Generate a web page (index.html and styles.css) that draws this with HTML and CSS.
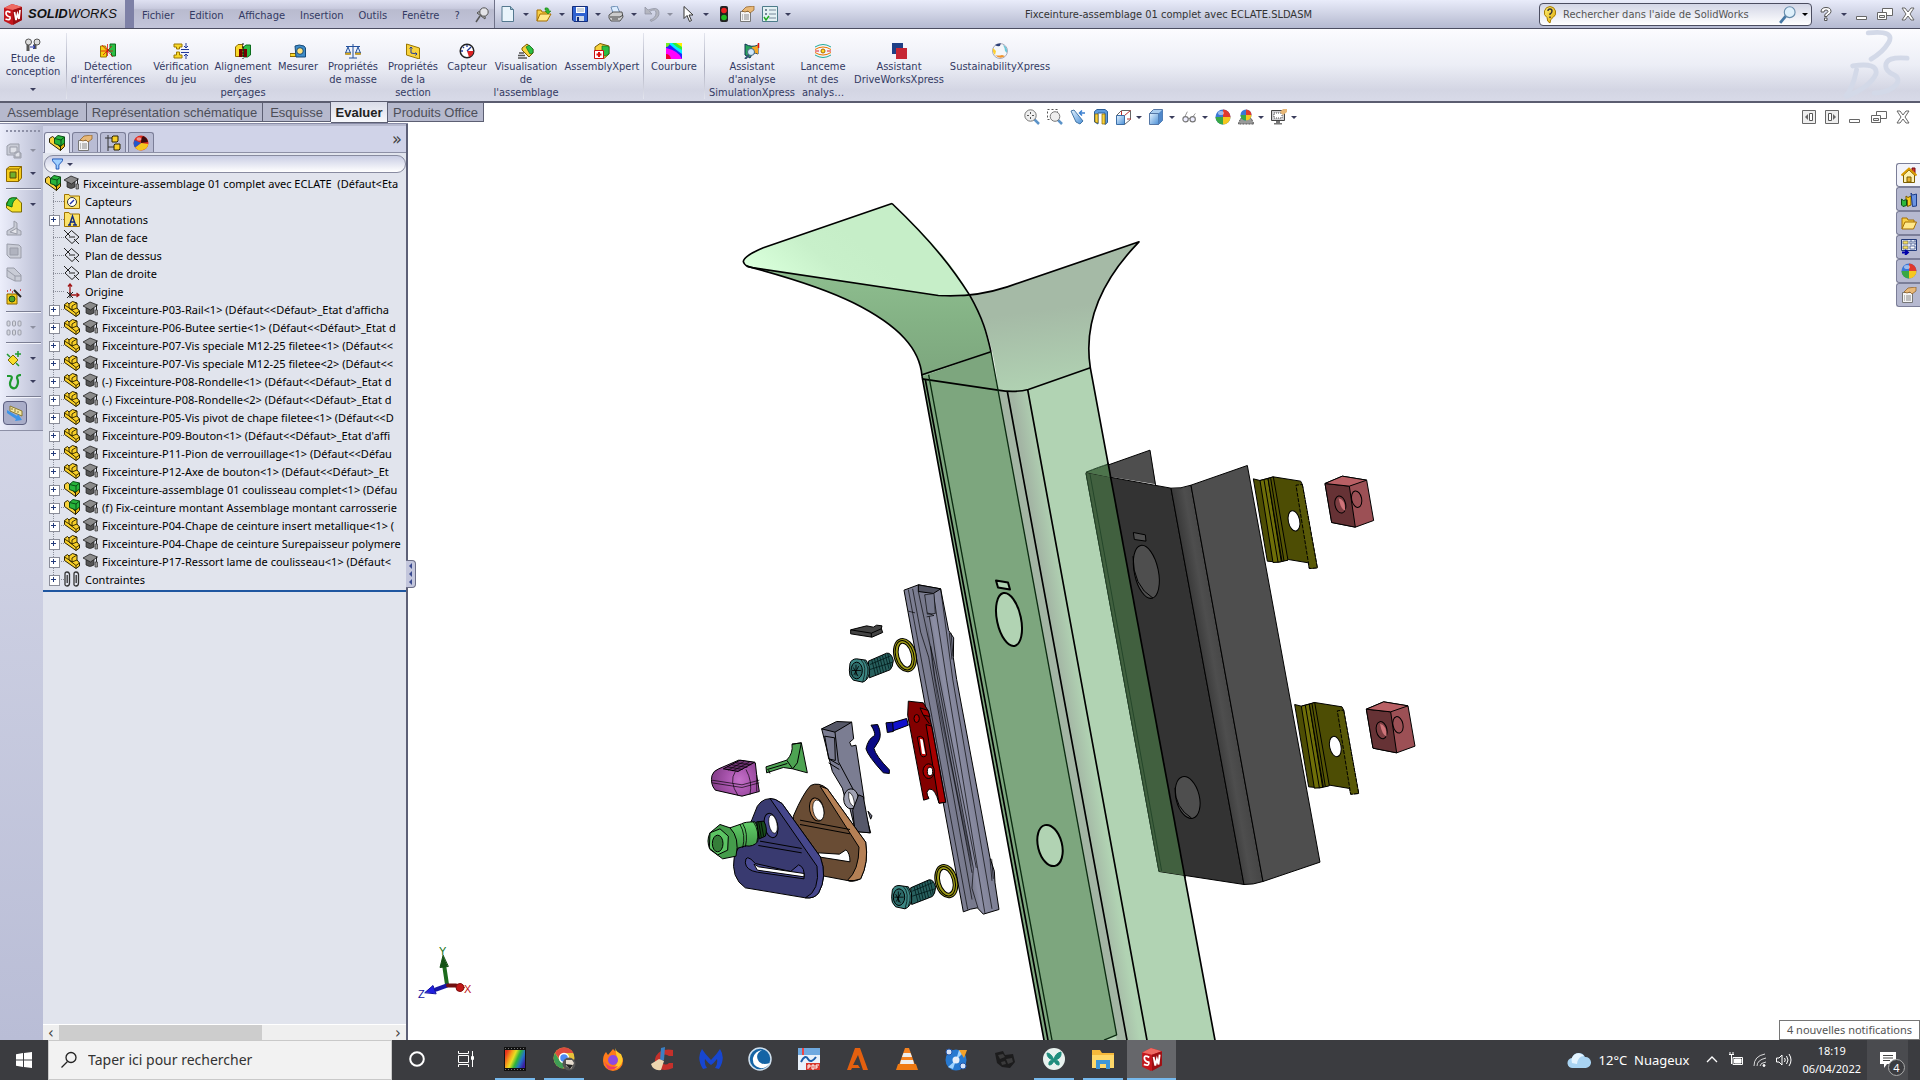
FILE: index.html
```html
<!DOCTYPE html>
<html lang="fr">
<head>
<meta charset="utf-8">
<title>SolidWorks - Fixceinture-assemblage 01 complet avec ECLATE.SLDASM</title>
<link rel="stylesheet" href="styles.css">
</head>
<body>
<svg class="sprite" aria-hidden="true">
  <defs>
    <linearGradient id="gold" x1="0" y1="0" x2="1" y2="1"><stop offset="0" stop-color="#fff27a"/><stop offset="1" stop-color="#e0a800"/></linearGradient>
    <linearGradient id="blueGlass" x1="0" y1="0" x2="1" y2="1"><stop offset="0" stop-color="#e6f4ff"/><stop offset="1" stop-color="#4a8fd6"/></linearGradient>
    <linearGradient id="film" x1="0" y1=".3" x2="1" y2=".7"><stop offset="0" stop-color="#e8341c"/><stop offset=".25" stop-color="#f5a51c"/><stop offset=".4" stop-color="#e6e022"/><stop offset=".6" stop-color="#2fb53a"/><stop offset=".8" stop-color="#2472c8"/><stop offset="1" stop-color="#3a1fa0"/></linearGradient>
    <linearGradient id="foldGreen" gradientUnits="userSpaceOnUse" x1="900" y1="750" x2="960" y2="740"><stop offset="0" stop-color="#a3b5a4"/><stop offset="1" stop-color="#b1d3b3"/></linearGradient>
    <linearGradient id="lipGreen" gradientUnits="userSpaceOnUse" x1="130" y1="260" x2="300" y2="60"><stop offset="0" stop-color="#d9ffdb"/><stop offset=".3" stop-color="#d0f8d2"/><stop offset=".6" stop-color="#c8f0ca"/><stop offset="1" stop-color="#c6eec8"/></linearGradient>
    <linearGradient id="neckGreen" x1="0" y1="0" x2="0" y2="1"><stop offset="0" stop-color="#8fbf90"/><stop offset=".5" stop-color="#84b285"/><stop offset="1" stop-color="#7da67e"/></linearGradient>
    <linearGradient id="flareGreen" x1=".4" y1="0" x2=".55" y2="1"><stop offset=".45" stop-color="#a5baa6"/><stop offset="1" stop-color="#b1d3b3"/></linearGradient>
    <linearGradient id="foldDark" gradientUnits="userSpaceOnUse" x1="430" y1="770" x2="500" y2="758"><stop offset="0" stop-color="#363636"/><stop offset=".6" stop-color="#4e4e4e"/><stop offset="1" stop-color="#474747"/></linearGradient>
    <linearGradient id="railGray" gradientUnits="userSpaceOnUse" x1="730" y1="560" x2="850" y2="540"><stop offset="0" stop-color="#7f8196"/><stop offset=".4" stop-color="#77798c"/><stop offset=".55" stop-color="#8c8ea4"/><stop offset="1" stop-color="#7b7d92"/></linearGradient>
    <radialGradient id="pink" gradientUnits="userSpaceOnUse" cx="148" cy="632" r="75"><stop offset="0" stop-color="#c572ca"/><stop offset=".5" stop-color="#a955ae"/><stop offset="1" stop-color="#8a418f"/></radialGradient>
    <linearGradient id="bushing" x1="0" y1="0" x2="0" y2="1"><stop offset="0" stop-color="#63cf6a"/><stop offset="1" stop-color="#3c9142"/></linearGradient>
  </defs>
  <symbol id="i-cube" viewBox="0 0 20 22"><path d="M1 5 9 1l10 3v13l-10 5-8-4z" fill="#c4161c"/><path d="M1 5 9 1l10 3-9 3z" fill="#ee6a62"/><path d="M10 7v15l9-5V4z" fill="#9d0e12"/><path d="M7.500 9.500Q3 7 3 10t4 4q1 4-4.500 2M11.500 9l1.500 8 1.500-6 1.500 5 1-9" fill="none" stroke="#fff" stroke-width="1.700"/></symbol>
  <symbol id="i-pin" viewBox="0 0 14 16"><path d="m5 9-4 6" stroke="#555" stroke-width="1.500"/><path d="m2 6 8 6q1-2-1-4L6 5Q3 4 2 6z" fill="#aaa" stroke="#555"/><circle cx="9" cy="5" r="4.200" fill="#e4e4e8" stroke="#555"/></symbol>
  <symbol id="i-new" viewBox="0 0 16 16"><path d="M2 .5h8.500l3 3v12H2z" fill="#e9f4fb" stroke="#54788f"/><path d="M10.500.5v3h3" fill="#9bc" stroke="#54788f"/></symbol>
  <symbol id="i-open" viewBox="0 0 16 16"><path d="M1 15V4h4l1 2h6v3" fill="#f8d046" stroke="#a66f00"/><path d="m1 15 3-7h11l-4 7z" fill="#ffe88a" stroke="#a66f00"/><path d="M9 2q4-1 4 3h2l-3 3-3-3h2q0-1-2-1z" fill="#2db52d" stroke="#147a14" stroke-width=".5"/></symbol>
  <symbol id="i-save" viewBox="0 0 16 16"><path d="M.5.500h15v15H2l-1.500-1.500z" fill="#2f62d0" stroke="#132d7b"/><path d="M4 1h9v6H4z" fill="#fff"/><path d="M5 3h7M5 5h7" stroke="#9ab"/><path d="M4 10h8v5H4z" fill="#cdd7e6"/><path d="M5 11h2v4H5z" fill="#132d7b"/></symbol>
  <symbol id="i-print" viewBox="0 0 16 16"><path d="m3 1 6-1 3 7H5z" fill="#dcecff" stroke="#6d8fb5"/><path d="m1 9 4-3h9l1 5-3 4H3l-2-3z" fill="#ccc" stroke="#555"/><path d="M2 11h10l3-2M4 13h6" stroke="#444" fill="none"/></symbol>
  <symbol id="i-undo" viewBox="0 0 16 16"><path d="M1 1v7h7L5.500 5.500Q12 2 12 7t-6 7l1 1.500Q16 12 15 6T4 4z" fill="#b4b6c0" stroke="#8d90a0" stroke-width=".7"/></symbol>
  <symbol id="i-pointer" viewBox="0 0 16 16"><path d="M4 .5v12l3-3 2.500 6 2-1-2.500-5.500H13z" fill="#fff" stroke="#333"/></symbol>
  <symbol id="i-light" viewBox="0 0 16 16"><rect x="4" width="8" height="16" rx="2" fill="#222"/><circle cx="8" cy="4.500" r="2.800" fill="#e22"/><circle cx="8" cy="11.500" r="2.800" fill="#2b2"/></symbol>
  <symbol id="i-prop" viewBox="0 0 16 16"><path d="M1.500 5.500h10v10h-10z" fill="#f4f4f4" stroke="#777"/><path d="M3 9h1M5 9h5M3 11h1M5 11h5M3 13h1M5 13h5" stroke="#888"/><path d="m3 5 4-4 8-1v4l-4 3-2-2-3 1z" fill="#e8b877" stroke="#8a5a20" stroke-width=".7"/></symbol>
  <symbol id="i-list" viewBox="0 0 16 16"><path d="M.5.500h15v15H.5z" fill="#e4f1f3" stroke="#4d7c8a"/><path d="M3 3h2v2H3zM3 7h2v2H3z" fill="#789"/><path d="M7 4h7M7 8h7M7 12h7" stroke="#789"/><path d="m2 11 2 3 3-4" stroke="#2a2" stroke-width="1.500" fill="none"/></symbol>
  <symbol id="i-bulb" viewBox="0 0 14 18"><path d="M7 .5a6 6 0 0 1 3 11q-3 1.500-3 5.500-3-1-3-5.500A6 6 0 0 1 7 .5z" fill="url(#gold)" stroke="#a67b00"/><path d="M5 5q0-2 2-2t2 2-2 3v1M7 10.500v1.500" stroke="#333" stroke-width="1.400" fill="none"/></symbol>
  <symbol id="i-mag" viewBox="0 0 16 16"><path d="m6 9-5 6" stroke="#4678a4" stroke-width="2.500"/><circle cx="9.500" cy="5.500" r="4.800" fill="#dff0fb" stroke="#668cab"/></symbol>
  <symbol id="i-help" viewBox="0 0 12 14"><path d="M1 5q0-4.500 5-4.500t5 4q0 2-3 3.500-1 .5-1 1.500H4.500q0-3 2.500-3.700Q8 5 8 4.500 8 3 6 3T4 5zM4.500 11H7v2.500H4.500z" fill="#fff" stroke="#555"/></symbol>
  <symbol id="i-min" viewBox="0 0 14 14"><path d="M1.500 9.500h10v3h-10z" fill="#fff" stroke="#666"/></symbol>
  <symbol id="i-restore" viewBox="0 0 16 14"><path d="M5.500 1.500h10v7h-10z" fill="#fff" stroke="#666"/><path d="M.5 5.500h9v7h-9z" fill="#fff" stroke="#666"/><path d="M2.500 8.500h5v2h-5z" fill="#eee" stroke="#666"/></symbol>
  <symbol id="i-close" viewBox="0 0 14 14"><path d="M1 1h3l3 4 3-4h3L9 7l4 6h-3L7 9l-3 4H1l4-6z" fill="#fff" stroke="#666"/></symbol>
  <symbol id="i-panel-l" viewBox="0 0 14 14"><path d="M.5.500h13v13H.5z" fill="#eee" stroke="#666"/><path d="M7.500 3.500h3v7h-3z" fill="#fff" stroke="#555"/><path d="M6 4 3 7l3 3z" fill="#666"/></symbol>
  <symbol id="i-panel-r" viewBox="0 0 14 14"><path d="M.5.500h13v13H.5z" fill="#eee" stroke="#666"/><path d="M3.500 3.500h3v7h-3z" fill="#fff" stroke="#555"/><path d="m8 4 3 3-3 3z" fill="#666"/></symbol>
  <symbol id="i-study" viewBox="0 0 16 14"><path d="M3 6v7M10 6v5" stroke="#555" stroke-width="3"/><circle cx="3.500" cy="4" r="3" fill="#ddd" stroke="#555"/><circle cx="12" cy="4" r="3" fill="#ddd" stroke="#555"/><path d="M5 9h5m-2-2 2 2-2 2" stroke="#23a" fill="none"/></symbol>
  <symbol id="i-interf" viewBox="0 0 16 16"><path d="M.5 3h5l1 3 2 1-2 2v5h-6z" fill="#f5cf10" stroke="#9a7700"/><path d="M10 1h5.500v12h-4v-3L8 7l2-2z" fill="#2cbf44" stroke="#0c6d1d"/><path d="m2 2 11 12M12 3 3 12M7.500 1v12M1 8h12" stroke="#d11" stroke-width=".8"/></symbol>
  <symbol id="i-check" viewBox="0 0 16 16"><path d="M1 1h8v3H6.500v2h-3V4H1zM3.500 9h3v3H9v3H1v-3h2.500z" fill="#f9d92a" stroke="#9a7700"/><path d="M8 6.500h8M8 9.500h8M13 0v5m-2-2 2 2 2-2M13 16v-5m-2 2 2-2 2 2" stroke="#223a9a" fill="none"/></symbol>
  <symbol id="i-align" viewBox="0 0 16 16"><path d="M.5 4 3 1.500h4.500v12H.5z" fill="#f9d92a" stroke="#8a6700"/><path d="M8.500 4 11 2h4.500v10l-3 2h-4z" fill="#2cbf44" stroke="#0c6d1d"/><path d="M4 6h3v8H4zM9 6h3v8H9z" fill="#700"/><path d="M8 0v16" stroke="#111" stroke-dasharray="2 1"/></symbol>
  <symbol id="i-measure" viewBox="0 0 16 16"><path d="M0 10.500h6v3H0z" fill="#f9d92a" stroke="#8a6700"/><path d="M5 3q4-2 9 0l1.500 2v9H6z" fill="#3e8cc9" stroke="#174a78"/><circle cx="10" cy="8" r="3.300" fill="#ffe27a" stroke="#174a78"/></symbol>
  <symbol id="i-mass" viewBox="0 0 16 16"><path d="M8 1v14M4 15h8M1 3.500h14M3 4l-2.500 6h5zM13 4l-2.500 6h5z" stroke="#23509c" fill="#d6e6fa"/><path d="M.5 10h5v1.500h-5zM10.500 10h5v1.500h-5z" fill="#e9b91b" stroke="#8a6700" stroke-width=".5"/></symbol>
  <symbol id="i-section" viewBox="0 0 16 16"><path d="m1.500 1 13 4v11l-13-4z" fill="#f8d23c" stroke="#9a7700"/><path d="M6 10V4M6 10l6 1M4.500 5.500 6 4l1.500 1.500M10.500 9.500 12 11l-1.500 1.500" stroke="#223a9a" fill="none"/></symbol>
  <symbol id="i-sensor" viewBox="0 0 16 16"><circle cx="8" cy="8" r="6.800" fill="#fff" stroke="#222" stroke-width="1.500"/><path d="M8 8h6.500A6.500 6.500 0 0 1 10 14z" fill="#d22"/><path d="M8 8 12 4M8 2v2M2 8h2M4 4l1 1" stroke="#223a9a" stroke-width="1.300"/></symbol>
  <symbol id="i-visu" viewBox="0 0 16 16"><path d="m4 5 5-4 6 5v4l-4 4-7-7z" fill="#f8d23c" stroke="#7a5c00"/><path d="m8 4 3-2 4 4v4l-3 1z" fill="#2cbf44" stroke="#0c6d1d" stroke-width=".7"/><path d="M1 10h5M0 12.500h7M0 15h9" stroke="#555" stroke-width="1.500"/></symbol>
  <symbol id="i-xpert" viewBox="0 0 16 16"><path d="m1 4 5-3.500L15 3v8l-5 4.500H1z" fill="#f8d23c" stroke="#7a5c00"/><path d="M8 3h5l2 1v7l-4 2-3-1z" fill="#2cbf44" stroke="#0c6d1d" stroke-width=".7"/><path d="M.5 7.500h9v8h-9z" fill="#fff" stroke="#c11"/><path d="M5 9v5M2.500 11.500h5" stroke="#d11" stroke-width="2"/></symbol>
  <symbol id="i-curv" viewBox="0 0 16 16"><path d="M0 0h16v16H0z" fill="#f0f"/><path d="M0 0h16v16q-3-8-16-11z" fill="#22f"/><path d="M2 0h14v11Q10 7 2 0z" fill="#0ef"/><path d="M6 0h10v7Q10 4 6 0z" fill="#3e3"/><path d="M10 0h6v4z" fill="#fe0"/><path d="M0 0h4q-1 4-4 4z" fill="#7e2"/><path d="M0 11q4 0 5 5H0z" fill="#e03"/></symbol>
  <symbol id="i-simu" viewBox="0 0 16 16"><path d="M1 1q7 4 13 1v9q-5-3-8 4L1 12z" fill="#27a35d" stroke="#135"/><path d="M8 4q4 0 6-2v9q-3-2-5-1z" fill="#f5a623"/><circle cx="7" cy="9" r="3.500" fill="#cfe8fb" stroke="#467"/><path d="m5 12-4 4" stroke="#357" stroke-width="2"/><path d="M14.500 0v5" stroke="#d11" stroke-width="1.500"/></symbol>
  <symbol id="i-flow" viewBox="0 0 16 16"><circle cx="8" cy="8" r="2" fill="#fd2" stroke="#a60"/><path d="M0 4q8-5 16 0M0 12q8 5 16 0" stroke="#2a9" fill="none"/><path d="M0 6.500q8-5 16 0M0 9.500q8 5 16 0" stroke="#e70" fill="none"/><path d="M0 8h4M12 8h4" stroke="#d22"/></symbol>
  <symbol id="i-drive" viewBox="0 0 16 16"><path d="M1 0h11v11H1z" fill="#1f3f86"/><path d="M5 5h11v11H5z" fill="#c62634"/></symbol>
  <symbol id="i-sust" viewBox="0 0 16 16"><circle cx="8" cy="8" r="7.500" fill="#f4f7fa" stroke="#aab"/><path d="M3 2a8 8 0 0 1 6-1.500Q8 5 3 2z" fill="#2b3f78"/><path d="M11 2q5 2 4 8l-2-2q0-3-2-6z" fill="#6cc7d9"/><path d="M3 12q5 5 10 1l-3-1q-4 1-7 0z" fill="#f0932b"/><path d="M1 5q-1 4 2 7l1-4z" fill="#ffd02e"/></symbol>
  <symbol id="i-zoomfit" viewBox="0 0 16 16"><path d="m10 10 5 5" stroke="#5b93c8" stroke-width="2.500"/><circle cx="6.500" cy="6.500" r="5.700" fill="#eee" stroke="#777"/><path d="M6.500 3v7M3 6.500h7" stroke="#555" stroke-dasharray="2 3"/></symbol>
  <symbol id="i-zoomarea" viewBox="0 0 16 16"><path d="M.5.500h10v10H.5z" fill="none" stroke="#555" stroke-dasharray="2 2"/><path d="m11 11 4 4" stroke="#5b93c8" stroke-width="2.500"/><circle cx="8" cy="7.500" r="4.800" fill="#eee" stroke="#777"/></symbol>
  <symbol id="i-prev" viewBox="0 0 16 16"><path d="m1 2 3-1 9 11-3 3-4-2z" fill="url(#blueGlass)" stroke="#4477a8"/><path d="M15 4h-5m2-2.500L9.500 4 12 6.500" stroke="#3a7fd0" stroke-width="1.500" fill="none"/></symbol>
  <symbol id="i-sect" viewBox="0 0 16 16"><path d="M1.500 2.500 4 .5h8l2.500 2v11l-2.500 2V4H5v11l-3.500-2z" fill="#5e9bdb" stroke="#2b5f99"/><path d="M2 5h3v9l-3-1zM9 5h3v10H9z" fill="#f8d23c" stroke="#8a6700" stroke-width=".7"/></symbol>
  <symbol id="i-orient" viewBox="0 0 16 16"><path d="M.5 6.500h8v9h-8z" fill="url(#blueGlass)" stroke="#3b6ea8"/><path d="m.5 6.500 5-5h9v9l-6 5" fill="none" stroke="#666"/><path d="m8.500 6.500 6-5M5.500 2v4M11 10h4" stroke="#b33"/></symbol>
  <symbol id="i-display" viewBox="0 0 16 16"><path d="m.5 4.500 4-4h9v11l-4 4v-11z" fill="#a9cdf0" stroke="#5577a5"/><path d="M.5 4.500h9v11h-9z" fill="url(#blueGlass)" stroke="#5577a5"/><path d="M9.500 4.500v11l4-4V.5z" fill="#4f87c9"/></symbol>
  <symbol id="i-glasses" viewBox="0 0 18 16"><path d="M3 8 6 2M12 8l3-4" stroke="#888" fill="none"/><circle cx="4" cy="10.500" r="3" fill="#eef" stroke="#777" stroke-width="1.300"/><circle cx="12" cy="10.500" r="3" fill="#eef" stroke="#777" stroke-width="1.300"/><path d="M7 10q1-1 2 0" stroke="#777" fill="none"/></symbol>
  <symbol id="i-ball" viewBox="0 0 16 16"><circle cx="8" cy="8" r="7.500" fill="#3a78d8"/><path d="M8 .5A7.500 7.500 0 0 1 15.500 8L8 8z" fill="#e03a2e"/><path d="M15.500 8A7.500 7.500 0 0 1 8 15.500V8z" fill="#f5c71f"/><path d="M.5 8A7.500 7.500 0 0 0 8 15.500V8z" fill="#39a845"/><ellipse cx="6" cy="4" rx="3" ry="2" fill="#fff" opacity=".5"/></symbol>
  <symbol id="i-wheel" viewBox="0 0 16 16"><circle cx="8" cy="8" r="7.500" fill="#e02a1e"/><path d="M8 8q0-5 2-7a7.500 7.500 0 0 1 5 6z" fill="#3a0d10"/><path d="M15.300 9A7.500 7.500 0 0 1 2 12.500L8 8z" fill="#f5c71f"/><path d="M1 10.500A7.500 7.500 0 0 1 1.500 5L8 8l-6 4.500z" fill="#2458c8"/><ellipse cx="6" cy="4" rx="2.500" ry="1.800" fill="#fff" opacity=".5"/></symbol>
  <symbol id="i-scene" viewBox="0 0 16 16"><path d="m0 15 3-6h10l3 6z" fill="#999" stroke="#555" stroke-dasharray="2 1"/><circle cx="8" cy="6" r="5.500" fill="#3a78d8"/><path d="M8 .5A5.500 5.500 0 0 1 13.500 6H8z" fill="#e03a2e"/><path d="M13.500 6A5.500 5.500 0 0 1 8 11.500V6z" fill="#f5c71f"/><path d="M2.500 6A5.500 5.500 0 0 0 8 11.500V6z" fill="#39a845"/></symbol>
  <symbol id="i-monitor" viewBox="0 0 16 16"><path d="M.5 1.500h13v10H.5z" fill="#cfcfd2" stroke="#444"/><path d="M3 4h8v5H3z" fill="#fff" stroke="#555" stroke-dasharray="1 1"/><path d="M5 12h4v2h2v1.500H3V14h2z" fill="#777"/><path d="m9 3 3-3h4v3l-4 3z" fill="#e8b877"/></symbol>
  <symbol id="i-asm" viewBox="0 0 16 16"><path d="m.5 3.500 3-2L5.500 3v3l6 6.500v3L.5 7.500z" fill="#f8d23c" stroke="#2b2200"/><path d="m11.500 15.500 4-4v-4l-4 2.500z" fill="#e2b010" stroke="#2b2200"/><path d="M5.500 3.500 9 .5l6.500 1.500v6L12 11 5.500 8.500z" fill="#27b43c" stroke="#0a4d16"/><path d="M5.500 3.500 12 5v6M12 5l3.500-3" stroke="#0a4d16" fill="none"/></symbol>
  <symbol id="i-part" viewBox="0 0 16 16"><path d="m.5 3.500 3-2L5 3l3.500-2.500L13 2v5l2.500 3v3L12 15.500.5 7.500z" fill="#f8cf28" stroke="#2b2200"/><path d="m.5 4 4 2.500 7.500 6v3M5 3v4l3 2 5-2M8 5l5-3M8 5v4M12 12.500l3.500-2.500" fill="none" stroke="#2b2200" stroke-width=".9"/></symbol>
  <symbol id="i-cap" viewBox="0 0 15 16"><path d="M3 7v5q4 3 8 0V6z" fill="#555" stroke="#222" stroke-width=".7"/><path d="m0 5 7-4 7.500 3-7 5z" fill="#8b8b8b" stroke="#222" stroke-width=".8"/><path d="M13.500 4v5" stroke="#222"/><path d="M12 9h2.500v5H12z" fill="#999" stroke="#333" stroke-width=".7"/></symbol>
  <symbol id="i-fsensor" viewBox="0 0 16 16"><path d="M.5 1.500H5l1 1.500h9.500v12.500H.5z" fill="#fbe36c" stroke="#a07400"/><circle cx="8" cy="9" r="4.500" fill="#fff" stroke="#333"/><path d="m6 11 4-4" stroke="#23a" stroke-width="1.500"/></symbol>
  <symbol id="i-fannot" viewBox="0 0 16 16"><path d="M.5 1.500H5l1 1.500h9.500v12.500H.5z" fill="#fbe36c" stroke="#a07400"/><path d="M4 14h3M9 14h4M5.500 14 8.500 5l3 9M6.500 11h4" stroke="#122a80" stroke-width="1.400" fill="none"/></symbol>
  <symbol id="i-plane" viewBox="0 0 16 16"><path d="m1 8 6.500-6.500L15 8l-7 6.500zM0 1l6 6M10 10l5 5M5 8h6" fill="none" stroke="#222"/></symbol>
  <symbol id="i-origin" viewBox="0 0 16 16"><path d="M6 12V1M4 3.500 6 1l2 2.500M6 12h9M12.500 10l2.500 2-2.500 2" stroke="#a01818" stroke-width="1.300" fill="none"/><path d="m3 9 6 6M9 9l-6 6M6 9v6" stroke="#222"/></symbol>
  <symbol id="i-clips" viewBox="0 0 16 16"><path d="M1 12V3q0-2 2-2t2.500 2v9q0 3-2.500 3t-2-3M10 12V3q0-2 2-2t2.500 2v9q0 3-2.500 3t-2-3M3.200 4v8M12.200 4v8" fill="none" stroke="#333" stroke-width="1.300"/></symbol>
  <symbol id="i-config" viewBox="0 0 16 16"><path d="M3 0v16M0 3h7M3 12h6" stroke="#333" fill="none"/><path d="m7 2 1-1h5v5l-1 1H7zM9 10l1-1h5v5l-1 1H9z" fill="#f8cf28" stroke="#2b2200"/></symbol>
  <symbol id="i-funnel" viewBox="0 0 12 12"><path d="M.5.500h11v2L7.500 7v4.500h-3V7L.5 2.500z" fill="#9fd0ff" stroke="#164fb5"/></symbol>
  <symbol id="i-gbox" viewBox="0 0 16 16"><path d="m1 3 3-2h9v9h2v5H8v-3H1z" fill="#c9ccd6" stroke="#9a9da9"/><path d="M4 4h7v6H4zM9 9h5v5H9z" fill="#dfe1e8" stroke="#9a9da9"/></symbol>
  <symbol id="i-ybox" viewBox="0 0 16 16"><path d="m.5 3 3-2.500h12V12l-3 3.500H.5z" fill="#f6cc1c" stroke="#8a6700"/><path d="M.5 3h12v12.500M12.500 3l3-2.500" stroke="#8a6700" fill="none"/><path d="M4 6h6v6H4z" fill="#6fae2e" stroke="#5b4a00"/></symbol>
  <symbol id="i-fillet" viewBox="0 0 16 16"><path d="m.5 6 4-5h6l5 5v9H6l-5.500-4z" fill="#f6e02c" stroke="#7a6a00"/><path d="M.5 8 3 2q3-2 8-1Q6 4 6 10z" fill="#2cb83c" stroke="#0c6d1d"/></symbol>
  <symbol id="i-grib" viewBox="0 0 16 16"><path d="M1 15v-4l7-4V1l3 2v6l4 2v4z" fill="#c9ccd6" stroke="#9a9da9"/><path d="m4 12 7-4v6z" fill="#e4e5eb" stroke="#9a9da9"/></symbol>
  <symbol id="i-gshell" viewBox="0 0 16 16"><path d="m1 1 12 1 2 2v11H4l-3-3z" fill="#c9ccd6" stroke="#9a9da9"/><path d="M4 5h8v7H4z" fill="#b0b3bf" stroke="#9a9da9"/></symbol>
  <symbol id="i-gwedge" viewBox="0 0 16 16"><path d="M1 2h7l7 7v6H9L1 11z" fill="#c9ccd6" stroke="#9a9da9"/><path d="m1 4 8 6v5M9 10h6" stroke="#9a9da9" fill="none"/></symbol>
  <symbol id="i-wizard" viewBox="0 0 16 16"><path d="M1 5h10v10H1z" fill="#f6cc1c" stroke="#8a6700"/><circle cx="6" cy="10" r="3" fill="#4fa52c" stroke="#264d12"/><path d="m8 1 7 7" stroke="#222" stroke-width="2"/><path d="M1 2h1M4 1h1M6 3h1M14 1h1" stroke="#c22" stroke-width="1.500"/></symbol>
  <symbol id="i-gpattern" viewBox="0 0 16 16"><g fill="#d5d7df" stroke="#9a9da9"><rect x="1" y="1" width="3" height="5" rx="1"/><rect x="6.500" y="1" width="3" height="5" rx="1"/><rect x="12" y="1" width="3" height="5" rx="1"/><rect x="1" y="10" width="3" height="5" rx="1"/><rect x="6.500" y="10" width="3" height="5" rx="1"/><rect x="12" y="10" width="3" height="5" rx="1"/></g></symbol>
  <symbol id="i-refgeo" viewBox="0 0 16 16"><path d="m2 9 5-5 5 5-5 5z" fill="#f8dc2c" stroke="#7a6a00"/><path d="M12 0v6M9 3h6M1 3l3 3M10 12l3 3" stroke="#1f9a2f" stroke-width="1.500"/></symbol>
  <symbol id="i-curve" viewBox="0 0 16 16"><path d="M1 2h3q3 0 1 4T5 13q4 3 6-1t0-8q0-3 4-3" stroke="#1f9a2f" stroke-width="2.200" fill="none"/></symbol>
  <symbol id="i-instant" viewBox="0 0 16 16"><path d="M3 1v5l12 5V6z" fill="#f4e7a2" stroke="#8a7a30"/><path d="M5 3v2M8 4v3M11 6v2" stroke="#8a7a30"/><path d="m0 5 10 6 1-2 4 6-7 1 1-2L0 8z" fill="#3c94e8"/></symbol>
  <symbol id="i-home" viewBox="0 0 16 16"><path d="M11 1h3v6h-3z" fill="#c33" stroke="#711"/><path d="M2.500 8 8 3l5.500 5v7.500h-11z" fill="#fdf0b0" stroke="#7a5c00"/><path d="m.5 8.500 7.500-7 7.500 7" stroke="#d99a00" stroke-width="2" fill="none"/><path d="M6 10h4v5H6z" fill="#e8b430" stroke="#7a5c00"/></symbol>
  <symbol id="i-books" viewBox="0 0 16 16"><path d="m.5 8 2 1.500 3-1v6L2 15.500.5 14z" fill="#2cb83c" stroke="#0c4d16"/><path d="m5 5 2 1.500L10 5v9l-3.500 1.500V9L5 8z" fill="#f6cc1c" stroke="#7a5c00"/><path d="m10 2 1.500 2L15.500 3v12l-4 .5z" fill="#6b93e0" stroke="#1c3c88"/></symbol>
  <symbol id="i-folder" viewBox="0 0 16 16"><path d="M1 14V3h5l1 2h6v3" fill="#f8d046" stroke="#a66f00"/><path d="m1 14 3-7h11.500l-3 7z" fill="#ffe88a" stroke="#a66f00"/></symbol>
  <symbol id="i-palette" viewBox="0 0 16 16"><path d="M.5.500h15v11H.5z" fill="#dfe6f5" stroke="#223a7a"/><path d="M2 2h5v3H2zM2 7h5v3H2z" fill="#f5e060" stroke="#555" stroke-width=".6"/><path d="M9 2h2v3H9zM13 2h2v3h-2zM9 7h5v3H9z" fill="#fff" stroke="#223a7a" stroke-width=".7"/><path d="M1 13.500h5M4 11l3 2.500L4 16" stroke="#00a" stroke-width="1.800" fill="none"/></symbol>
</svg>

<div class="app">
  <header class="titlebar">
    <div class="brand"><svg class="brand-cube"><use href="#i-cube"/></svg><span class="brand-name"><b>SOLID</b>WORKS</span></div>
    <nav class="menu" aria-label="Menu">
      <button>Fichier</button><button>Edition</button><button>Affichage</button><button>Insertion</button><button>Outils</button><button>Fenêtre</button><button>?</button>
      <button class="pin" aria-label="Epingler"><svg class="ic"><use href="#i-pin"/></svg></button>
    </nav>
    <div class="quick">
      <button aria-label="Nouveau"><svg class="ic"><use href="#i-new"/></svg><i class="dd"></i></button>
      <button aria-label="Ouvrir"><svg class="ic"><use href="#i-open"/></svg><i class="dd"></i></button>
      <button aria-label="Enregistrer"><svg class="ic"><use href="#i-save"/></svg><i class="dd"></i></button>
      <button aria-label="Imprimer"><svg class="ic"><use href="#i-print"/></svg><i class="dd"></i></button>
      <button aria-label="Annuler"><svg class="ic"><use href="#i-undo"/></svg><i class="dd off"></i></button>
      <button aria-label="Sélectionner"><svg class="ic"><use href="#i-pointer"/></svg><i class="dd"></i></button>
      <button class="solo" aria-label="Reconstruire"><svg class="ic"><use href="#i-light"/></svg></button>
      <button class="solo" aria-label="Propriétés"><svg class="ic"><use href="#i-prop"/></svg></button>
      <button aria-label="Options"><svg class="ic"><use href="#i-list"/></svg><i class="dd"></i></button>
    </div>
    <h1 class="doc-title">Fixceinture-assemblage 01 complet avec ECLATE.SLDASM</h1>
    <div class="help-search">
      <svg class="bulb"><use href="#i-bulb"/></svg>
      <input type="text" aria-label="Recherche d'aide" placeholder="Rechercher dans l'aide de SolidWorks">
      <button aria-label="Rechercher"><svg class="help-mag"><use href="#i-mag"/></svg><i class="dd black"></i></button>
    </div>
    <div class="window-buttons">
      <button class="help" aria-label="Aide"><svg class="ic14"><use href="#i-help"/></svg><i class="dd"></i></button>
      <button aria-label="Réduire"><svg class="ic14"><use href="#i-min"/></svg></button>
      <button aria-label="Restaurer"><svg class="ic"><use href="#i-restore"/></svg></button>
      <button aria-label="Fermer"><svg class="ic14"><use href="#i-close"/></svg></button>
    </div>
  </header>

  <section class="ribbon" aria-label="Evaluer">
    <button class="cmd study"><svg class="ic"><use href="#i-study"/></svg><span>Etude de<br>conception</span><i class="dd"></i></button>
    <i class="rule"></i>
    <button class="cmd w82"><svg class="ic"><use href="#i-interf"/></svg><span>Détection<br>d'interférences</span></button>
    <button class="cmd w64"><svg class="ic"><use href="#i-check"/></svg><span>Vérification<br>du jeu</span></button>
    <button class="cmd w60"><svg class="ic"><use href="#i-align"/></svg><span>Alignement<br>des<br>perçages</span></button>
    <button class="cmd w50"><svg class="ic"><use href="#i-measure"/></svg><span>Mesurer</span></button>
    <button class="cmd w60"><svg class="ic"><use href="#i-mass"/></svg><span>Propriétés<br>de masse</span></button>
    <button class="cmd w60"><svg class="ic"><use href="#i-section"/></svg><span>Propriétés<br>de la<br>section</span></button>
    <button class="cmd w48"><svg class="ic"><use href="#i-sensor"/></svg><span>Capteur</span></button>
    <button class="cmd w70"><svg class="ic"><use href="#i-visu"/></svg><span>Visualisation<br>de<br>l'assemblage</span></button>
    <button class="cmd w82"><svg class="ic"><use href="#i-xpert"/></svg><span>AssemblyXpert</span></button>
    <i class="rule"></i>
    <button class="cmd w60"><svg class="ic"><use href="#i-curv"/></svg><span>Courbure</span></button>
    <i class="rule"></i>
    <button class="cmd w94"><svg class="ic"><use href="#i-simu"/></svg><span>Assistant<br>d'analyse<br>SimulationXpress</span></button>
    <button class="cmd w48"><svg class="ic"><use href="#i-flow"/></svg><span>Lanceme<br>nt des<br>analys…</span></button>
    <button class="cmd w104"><svg class="ic"><use href="#i-drive"/></svg><span>Assistant<br>DriveWorksXpress</span></button>
    <button class="cmd w98"><svg class="ic"><use href="#i-sust"/></svg><span>SustainabilityXpress</span></button>
    <svg class="ds" viewBox="0 0 74 72" fill="none" stroke="#d3d9e8" stroke-linecap="round"><path d="M28 4q28-3 21 10-6 10-18 17" stroke-width="5"/><path d="M12 38q26-4 24 8-6 14-32 24 8-8 12-28" stroke-width="5"/><path d="M68 30q-22-2-22 8 0 5 8 9t2 11-22 8" stroke-width="5"/></svg>
  </section>

  <main class="work">
    <nav class="tabs" aria-label="Onglets">
      <button class="t1">Assemblage</button><button class="t2">Représentation schématique</button><button class="t3">Esquisse</button><button class="t4 active">Evaluer</button><button class="t5">Produits Office</button>
    </nav>

    <div class="side">
      <div class="tools">
        <div class="toolset">
          <i class="grip"></i>
          <button aria-label="Insérer"><svg class="ic"><use href="#i-gbox"/></svg><i class="dd gray"></i></button>
          <button aria-label="Extrusion"><svg class="ic"><use href="#i-ybox"/></svg><i class="dd"></i></button>
          <hr>
          <button aria-label="Congé"><svg class="ic"><use href="#i-fillet"/></svg><i class="dd"></i></button>
          <button aria-label="Nervure"><svg class="ic"><use href="#i-grib"/></svg></button>
          <button aria-label="Coque"><svg class="ic"><use href="#i-gshell"/></svg></button>
          <button aria-label="Dépouille"><svg class="ic"><use href="#i-gwedge"/></svg></button>
          <button aria-label="Perçage"><svg class="ic"><use href="#i-wizard"/></svg></button>
          <hr>
          <button aria-label="Répétition"><svg class="ic"><use href="#i-gpattern"/></svg><i class="dd gray"></i></button>
          <hr>
          <button aria-label="Géométrie de référence"><svg class="ic"><use href="#i-refgeo"/></svg><i class="dd"></i></button>
          <button aria-label="Courbes"><svg class="ic"><use href="#i-curve"/></svg><i class="dd"></i></button>
          <hr>
          <button class="pressed" aria-label="Instant3D"><svg class="ic"><use href="#i-instant"/></svg></button>
        </div>
      </div>
      <div class="manager">
        <div class="mtabs">
          <button class="on" aria-label="Arbre de création"><svg class="ic"><use href="#i-asm"/></svg></button>
          <button aria-label="PropertyManager"><svg class="ic"><use href="#i-prop"/></svg></button>
          <button aria-label="ConfigurationManager"><svg class="ic"><use href="#i-config"/></svg></button>
          <button aria-label="DisplayManager"><svg class="ic"><use href="#i-wheel"/></svg></button>
          <span class="more">»</span>
        </div>
        <div class="filter"><svg class="funnel"><use href="#i-funnel"/></svg><i class="dd"></i><input type="text" aria-label="Filtre"></div>
        <ul class="tree">
          <li class="root"><svg class="ic"><use href="#i-asm"/></svg><svg class="ic"><use href="#i-cap"/></svg><span>Fixceinture-assemblage 01 complet avec ECLATE&nbsp; (Défaut&lt;Eta</span></li>
          <li><i class="br"></i><svg class="ic"><use href="#i-fsensor"/></svg><span>Capteurs</span></li>
          <li><i class="br plus"></i><svg class="ic"><use href="#i-fannot"/></svg><span>Annotations</span></li>
          <li><i class="br"></i><svg class="ic"><use href="#i-plane"/></svg><span>Plan de face</span></li>
          <li><i class="br"></i><svg class="ic"><use href="#i-plane"/></svg><span>Plan de dessus</span></li>
          <li><i class="br"></i><svg class="ic"><use href="#i-plane"/></svg><span>Plan de droite</span></li>
          <li><i class="br"></i><svg class="ic"><use href="#i-origin"/></svg><span>Origine</span></li>
          <li><i class="br plus"></i><svg class="ic"><use href="#i-part"/></svg><svg class="ic"><use href="#i-cap"/></svg><span>Fixceinture-P03-Rail&lt;1&gt; (Défaut&lt;&lt;Défaut&gt;_Etat d'afficha</span></li>
          <li><i class="br plus"></i><svg class="ic"><use href="#i-part"/></svg><svg class="ic"><use href="#i-cap"/></svg><span>Fixceinture-P06-Butee sertie&lt;1&gt; (Défaut&lt;&lt;Défaut&gt;_Etat d</span></li>
          <li><i class="br plus"></i><svg class="ic"><use href="#i-part"/></svg><svg class="ic"><use href="#i-cap"/></svg><span>Fixceinture-P07-Vis speciale M12-25 filetee&lt;1&gt; (Défaut&lt;&lt;</span></li>
          <li><i class="br plus"></i><svg class="ic"><use href="#i-part"/></svg><svg class="ic"><use href="#i-cap"/></svg><span>Fixceinture-P07-Vis speciale M12-25 filetee&lt;2&gt; (Défaut&lt;&lt;</span></li>
          <li><i class="br plus"></i><svg class="ic"><use href="#i-part"/></svg><svg class="ic"><use href="#i-cap"/></svg><span>(-) Fixceinture-P08-Rondelle&lt;1&gt; (Défaut&lt;&lt;Défaut&gt;_Etat d</span></li>
          <li><i class="br plus"></i><svg class="ic"><use href="#i-part"/></svg><svg class="ic"><use href="#i-cap"/></svg><span>(-) Fixceinture-P08-Rondelle&lt;2&gt; (Défaut&lt;&lt;Défaut&gt;_Etat d</span></li>
          <li><i class="br plus"></i><svg class="ic"><use href="#i-part"/></svg><svg class="ic"><use href="#i-cap"/></svg><span>Fixceinture-P05-Vis pivot de chape filetee&lt;1&gt; (Défaut&lt;&lt;D</span></li>
          <li><i class="br plus"></i><svg class="ic"><use href="#i-part"/></svg><svg class="ic"><use href="#i-cap"/></svg><span>Fixceinture-P09-Bouton&lt;1&gt; (Défaut&lt;&lt;Défaut&gt;_Etat d'affi</span></li>
          <li><i class="br plus"></i><svg class="ic"><use href="#i-part"/></svg><svg class="ic"><use href="#i-cap"/></svg><span>Fixceinture-P11-Pion de verrouillage&lt;1&gt; (Défaut&lt;&lt;Défau</span></li>
          <li><i class="br plus"></i><svg class="ic"><use href="#i-part"/></svg><svg class="ic"><use href="#i-cap"/></svg><span>Fixceinture-P12-Axe de bouton&lt;1&gt; (Défaut&lt;&lt;Défaut&gt;_Et</span></li>
          <li><i class="br plus"></i><svg class="ic"><use href="#i-asm"/></svg><svg class="ic"><use href="#i-cap"/></svg><span>Fixceinture-assemblage 01 coulisseau complet&lt;1&gt; (Défau</span></li>
          <li><i class="br plus"></i><svg class="ic"><use href="#i-asm"/></svg><svg class="ic"><use href="#i-cap"/></svg><span>(f) Fix-ceinture montant Assemblage montant carrosserie</span></li>
          <li><i class="br plus"></i><svg class="ic"><use href="#i-part"/></svg><svg class="ic"><use href="#i-cap"/></svg><span>Fixceinture-P04-Chape de ceinture insert metallique&lt;1&gt; (</span></li>
          <li><i class="br plus"></i><svg class="ic"><use href="#i-part"/></svg><svg class="ic"><use href="#i-cap"/></svg><span>Fixceinture-P04-Chape de ceinture Surepaisseur polymere</span></li>
          <li><i class="br plus"></i><svg class="ic"><use href="#i-part"/></svg><svg class="ic"><use href="#i-cap"/></svg><span>Fixceinture-P17-Ressort lame de coulisseau&lt;1&gt; (Défaut&lt;</span></li>
          <li><i class="br plus last"></i><svg class="ic"><use href="#i-clips"/></svg><span>Contraintes</span></li>
        </ul>
        <div class="hscroll"><button aria-label="Défiler à gauche">‹</button><i class="thumb"></i><button aria-label="Défiler à droite">›</button></div>
        <button class="handle" aria-label="Replier le panneau"><i></i><i></i><i></i></button>
      </div>
    </div>

    <section class="viewport" aria-label="Zone graphique">
      <svg class="model" viewBox="408 104 1512 936" role="img" aria-label="Vue éclatée de l'assemblage" stroke-linejoin="round">
        <!-- montant carrosserie -->
        <g transform="translate(720 190) scale(.33333)" stroke="#000" stroke-width="5">
          <g stroke="none">
            <path d="M606 560 972 2552H1485L1111 535 925 600 860 606z" fill="#b1d3b3"/>
            <path d="M862 606 1221 2552H1281L923 600z" fill="url(#foldGreen)"/>
            <path d="M834 604 1190 2552h31L862 606z" fill="#a3b5a4"/>
            <path d="M606 560 813 487 1190 2536 1152 2552H972z" fill="#7da67e"/>
            <path d="M80 230C230 270 340 310 400 340 540 410 600 480 606 560L813 487Q798 400 749 317 700 324 655 318z" fill="url(#neckGreen)"/>
            <path d="M516 42Q690 200 749 317 690 324 655 318L90 234Q40 210 130 175z" fill="url(#lipGreen)"/>
            <path d="M749 317Q800 312 862 292L1257 157Q1080 340 1111 535L925 600Q890 608 834 602 820 430 749 317z" fill="url(#flareGreen)"/>
          </g>
          <g fill="none">
            <path d="M516 42 130 175Q70 200 70 217 75 232 95 234L655 318Q760 325 862 292L1257 157Q1080 340 1111 535L1485 2552"/>
            <path d="M80 230C230 270 340 310 400 340 540 410 600 480 606 560"/>
            <path d="M516 42C640 160 700 240 749 317 790 390 800 430 813 487M606 556 813 487M606 568 834 602Q885 610 925 600L1111 535"/>
            <path d="M606 560 972 2552M616 570 984 2552M862 606 1221 2552M923 600 1281 2552"/>
            <path d="M626 556 996 2552M813 487 1190 2536 1152 2552" stroke="#0b2a10" stroke-width="4"/>
          </g>
        </g>
        <g fill="#b1d3b3" stroke="#000" stroke-width="2">
          <path d="m996 581 12 2 2 7-12-2z"/>
          <ellipse cx="1009" cy="620" rx="12" ry="27" transform="rotate(-12 1009 620)"/>
          <ellipse cx="1050" cy="846" rx="12" ry="21" transform="rotate(-14 1050 846)"/>
        </g>
        <!-- renfort, pattes et ecrous -->
        <g transform="translate(1060 430) scale(.33333)" stroke="#000" stroke-width="3">
          <path d="m78 130 192-68 17 102z" fill="#4e4e4e" stroke="none"/>
          <path d="m78 130 192-68 17 107" fill="none"/>
          <path d="M78 130 333 176 552 1365 297 1326z" fill="#333"/>
          <path d="M333 176q30 2 60-9L609 1356q-30 10-57 9z" fill="url(#foldDark)"/>
          <path d="M393 167 562 108 780 1298 609 1356z" fill="#4e4e4e"/>
          <g stroke="none"><path d="M78 128 146 104l6 40z" fill="#4d744c"/><path d="m78 130 74 14L374 1338l-77-12z" fill="#41603f"/></g>
          <path d="m78 132 219 1194M90 134l215 1190M78 128q40-16 66-24" fill="none" stroke="#24462a"/>
          <path d="M144 100 375 1345" fill="none" stroke-width="5"/>
          <path d="m220 309 36 7 2 19-35-5z" fill="#4e4e4e"/>
          <ellipse cx="259" cy="427" rx="36" ry="81" transform="rotate(-12 259 427)" fill="#4e4e4e"/>
          <ellipse cx="383" cy="1104" rx="35" ry="64" transform="rotate(-14 383 1104)" fill="#4e4e4e"/>
          <path d="M219 380q0 90 60 126M345 1075q0 60 50 91" fill="none"/>
          <g id="clip"><path d="m580 148 20 5 40-11 82 13 5 10 45 250-24 2-3-17-60-10-30 8-33-3z" fill="#4d4d04"/><path d="m600 153 24-6 40 250-25 2z" fill="#6e6e08"/><path d="m640 142 44 250-18 4-42-249z" fill="#565604"/><path d="m727 165 45 250-24 2-40-250z" fill="#595908" stroke-dasharray="12 4"/><path d="m612 151 42 246M632 146l40 248" fill="none"/><ellipse cx="702" cy="274" rx="17" ry="31" transform="rotate(-12 702 274)" fill="#fff"/></g>
          <use href="#clip" x="124" y="677"/>
          <g id="nut"><path d="m795 162 52-22 73 12 21 121-55 20-71-14z" fill="#9c5055"/><path d="m795 162 73 8 18 123-71-14z" fill="#663235"/><path d="m795 162 52-22 73 12-52 18z" fill="#b96065"/><ellipse cx="841" cy="225" rx="16" ry="26" transform="rotate(-12 841 225)" fill="#7d3e42"/><path d="M836 206q20 4 20 38-14-4-20-38z" fill="#d0757a" stroke="none"/><ellipse cx="890" cy="209" rx="15" ry="25" transform="rotate(-12 890 209)" fill="none"/></g>
          <use href="#nut" x="124" y="677"/>
        </g>
        <!-- rail, boutons et visserie -->
        <g transform="translate(690 570) scale(.33333)" stroke="#000" stroke-width="3">
          <path d="m642 62 43-16 67 12 24 125 15 22-1 60 10 65 100 535 13 40 2 35 12 80-47 14-18-19-20 4-22 8z" fill="url(#railGray)"/>
          <path d="m685 46 67 12-22 14-45-6z" fill="#505260"/>
          <path d="m712 160 14 130 20 130 100 480-4-50-98-460z" fill="#4b4d5b" stroke="none"/>
          <path d="m655 60 178 960M668 58l24 130 24 75 130 727M685 66l30 140 20 80 115 610-4 60 18 60M706 75l22 125 14 95 117 600M730 72l40 260 115 700M752 58l36 270 118 690M655 125l20 5M722 230l12 90 112 590" fill="none" stroke-width="2"/>
          <path d="m704 76 28-4 4 60-24 2zM712 130l20 8-22 4" fill="#777a8e" stroke-width="2"/>
          <path d="m778 190 8 80M783 190l6 70M900 868l6 66M905 868l5 60" fill="none" stroke-width="2"/>
          <path d="m482 181 48-12 20 4 10-6 16 2-2 8 4 12-32 14-64-10z" fill="#444"/><path d="m482 181 62 10 32-14M544 191v12" fill="none"/>
          <g id="screw"><path d="m535 275 55-24q14-2 20 22-2 22-10 28l-62 24z" fill="#28605e"/><path d="m545 270 12 48M553 267l12 48M561 264l12 48M569 261l12 48M577 257l12 48M585 254l12 44M593 251l10 44M540 300l68-22M540 285l62-26" fill="none" stroke="#031c1c" stroke-width="2.500"/><path d="M480 282q5-14 20-14l28 4q14 18 10 40-4 20-20 26l-28-6q-14-12-12-30z" fill="#3d8784"/><path d="M512 270q22 20 6 68M522 272q20 24 6 58" fill="none" stroke-width="2"/><ellipse cx="500" cy="303" rx="17" ry="25" fill="#2d6b69"/><path d="m490 294 14 26M506 290l-14 26M486 303h28M498 286v32" fill="none" stroke-width="2.500"/></g>
          <use href="#screw" x="127" y="680"/>
          <g id="washer" fill="none"><ellipse cx="645" cy="257" rx="26" ry="44" transform="rotate(-15 645 257)" stroke-width="17"/><ellipse cx="645" cy="257" rx="26" ry="44" transform="rotate(-15 645 257)" stroke="#a19d17" stroke-width="11"/><ellipse cx="644" cy="257" rx="27" ry="45" transform="rotate(-15 645 257)" stroke-width="3"/></g>
          <use href="#washer" x="124" y="678"/>
          <path d="m655 395 45 5 15 25 10 45 42 228-20 3q-12-45-28-42-15 6-2 28l-16 5-48-255z" fill="#830000"/>
          <path d="m708 465 17 5 42 228-20 3z" fill="#a80000"/><path d="m690 415 24 8 6 18-20-4zM700 437l18 26" fill="#a80000"/>
          <path d="M682 503q10-6 18 2l10 52q-10 10-18 0z" fill="#b50000"/><path d="m690 508 8 2 8 44-10-1z" fill="#fff" stroke="none"/>
          <ellipse cx="680" cy="447" rx="8" ry="12" fill="#a00"/><ellipse cx="716" cy="605" rx="17" ry="22" fill="#a80000"/><ellipse cx="720" cy="606" rx="8" ry="13" fill="#fff"/>
          <path d="m605 460 45-13 5 20-48 18z" fill="#1111cc"/><path d="m588 460 20-2 2 28-18 3z" fill="#0a0a96"/>
          <path d="m543 467 20-2q14 30 3 50l-14 22q5 22 46 64v11l-18-2q-46-50-52-72 6-30 26-40 2-10-11-31z" fill="#0a0a85"/>
          <path d="m395 478 90-20 6 50-12 10 5 12 14-3 24 158-6 48 12 3 14 54-45-4-20-80q-15-20-20-50l-30-50z" fill="#7b7d92"/>
          <path d="m395 478 45-22 45 2-50 30z" fill="#555767"/><path d="m404 500 30 5 2 68-20-5zM435 488l10 88 50 94M416 568l32 18M416 580l32 20" fill="none"/>
          <ellipse cx="483" cy="688" rx="22" ry="30" fill="#9fa1b2"/><path d="M476 668q16 4 18 44-20-6-18-44z" fill="#fff" stroke-width="2"/><path d="m488 722 18-46 14 6 20 108-45-4z" fill="#56586a"/>
          <path d="m534 725 12 14-4 10z" fill="#7b7d92"/>
          <path d="m228 592 62-20q20-20 16-48l28-4 18 90-44-12-28-4-50 16z" fill="#4da352"/><path d="m306 524 28-4-12 60-14 18M290 572l18 26M232 600l60-18M240 612l-4-10" fill="none"/>
          <path d="M66 618q4-14 20-20l60-26 50 8 4 36 8 50-52 14-80-18q-16-18-10-44z" fill="url(#pink)"/><path d="m100 598 50-26 44 6-50 28z" fill="#6f3273"/><path d="m112 592 46 8M126 586l46 8M138 580l46 6M114 602l48-26M128 604l50-26" fill="none" stroke-width="2"/><path d="m66 640 90 14 52-14M66 632l90 14 52-14M136 606q-20 30 8 72M168 600q20 36 12 76M200 616v50" fill="none" stroke-width="2"/>
          <path d="M310 740q30-70 52-92 24-12 50 10l115 160q10 60-15 110-25 12-40 5l-160-30zM385 850l0 12 95 15q0-26-12-36l-20 13z" fill="#694c34" fill-rule="evenodd"/>
          <path d="m412 658 115 160q10 60-15 110-20 8-40 5 35-30 35-100L390 650z" fill="#b58055"/>
          <path d="m330 752 150 28M330 765l150 28" fill="none"/><ellipse cx="380" cy="720" rx="21" ry="35" transform="rotate(-12 380 720)" fill="#b58055"/><ellipse cx="385" cy="722" rx="16" ry="31" transform="rotate(-12 385 722)" fill="#fff" stroke-width="2"/>
          <path d="m186 750 16-40q20-30 54-20l20 12 115 160q22 60-5 108-12 18-40 15l-180-30q-45-30-33-95z" fill="#393a70"/>
          <path d="m256 690 20 12 115 160q22 60-5 108-12 18-40 15 45-20 35-95L240 687z" fill="#46478c"/>
          <path d="m210 815 125 22M205 828l130 22" fill="none"/>
          <path d="M196 882q-30-34-30-2 2 22 36 28l140 20q4-35-16-42l-24 20z" fill="#4a4b94"/><path d="m192 884 10 18 140 20v-10l-136-20z" fill="#fff"/>
          <ellipse cx="243" cy="768" rx="20" ry="37" transform="rotate(-12 243 768)" fill="#46478c"/><ellipse cx="249" cy="764" rx="12" ry="28" transform="rotate(-12 249 764)" fill="#fff" stroke-width="2"/>
          <path d="m120 775 35-12q8-6 40-6 16 26 8 60-14 16-36 12l-47 14z" fill="url(#bushing)"/><path d="m200 757 22-2q12 24 4 45l-18 8z" fill="#174a1b"/><path d="m150 765q18 30 8 70M158 762q18 30 8 70M190 757q20 30 10 62M206 757l8 48M213 757l8 44" fill="none" stroke-width="2.500"/>
          <path d="m60 790 30-25 30 10q30 30 18 85l-40 8-38-28q-12-26 0-50z" fill="#459c4b"/><path d="m60 790 30-12 25 22-2 42-30 14-25-20z" fill="#5cc463"/><ellipse cx="83" cy="822" rx="16" ry="25" fill="#357e39"/>
        </g>
        <!-- triade de reference -->
        <g fill="none" stroke-linecap="round"><path d="m447 985-3-20" stroke="#1d6b1d" stroke-width="4"/><path d="m443 956-3 12 8-1z" fill="#145214" stroke="#145214"/><path d="m447 986-11 4" stroke="#1717a5" stroke-width="4"/><path d="m425 993 8-7 3 8z" fill="#2020e0" stroke="#1010a0"/><path d="M448 986h8" stroke="#701010" stroke-width="4"/><circle cx="460" cy="988" r="4" fill="#c11616" stroke="#801010"/></g>
        <g class="axis"><text x="439" y="955" fill="#147014">Y</text><text x="464" y="993" fill="#c01414">X</text><text x="418" y="998" fill="#1414a0">Z</text></g>
      </svg>
      <div class="view-head">
        <div class="headsup">
          <button aria-label="Zoom au mieux"><svg class="ic"><use href="#i-zoomfit"/></svg></button>
          <button aria-label="Zoom fenêtre"><svg class="ic"><use href="#i-zoomarea"/></svg></button>
          <button aria-label="Vue précédente"><svg class="ic"><use href="#i-prev"/></svg></button>
          <button aria-label="Vue en coupe"><svg class="ic"><use href="#i-sect"/></svg></button>
          <button aria-label="Orientation"><svg class="ic"><use href="#i-orient"/></svg><i class="dd"></i></button>
          <button aria-label="Style d'affichage"><svg class="ic"><use href="#i-display"/></svg><i class="dd"></i></button>
          <button aria-label="Cacher/Montrer"><svg class="ic"><use href="#i-glasses"/></svg><i class="dd"></i></button>
          <button aria-label="Apparence"><svg class="ic"><use href="#i-ball"/></svg></button>
          <button aria-label="Scène"><svg class="ic"><use href="#i-scene"/></svg><i class="dd"></i></button>
          <button aria-label="Paramètres de vue"><svg class="ic"><use href="#i-monitor"/></svg><i class="dd"></i></button>
        </div>
        <div class="docbuttons">
          <button aria-label="Panneau gauche"><svg class="ic14"><use href="#i-panel-l"/></svg></button>
          <button aria-label="Panneau droit"><svg class="ic14"><use href="#i-panel-r"/></svg></button>
          <button aria-label="Réduire le document"><svg class="ic14"><use href="#i-min"/></svg></button>
          <button aria-label="Restaurer le document"><svg class="ic"><use href="#i-restore"/></svg></button>
          <button aria-label="Fermer le document"><svg class="ic14"><use href="#i-close"/></svg></button>
        </div>
      </div>
      <nav class="taskpane" aria-label="Volet des tâches">
        <button class="on" aria-label="Ressources"><svg class="ic"><use href="#i-home"/></svg></button>
        <button aria-label="Bibliothèque"><svg class="ic"><use href="#i-books"/></svg></button>
        <button aria-label="Explorateur"><svg class="ic"><use href="#i-folder"/></svg></button>
        <button aria-label="Palette de vues"><svg class="ic"><use href="#i-palette"/></svg></button>
        <button aria-label="Apparences"><svg class="ic"><use href="#i-ball"/></svg></button>
        <button aria-label="Propriétés personnalisées"><svg class="ic"><use href="#i-prop"/></svg></button>
      </nav>
      <div class="toast" role="tooltip">4 nouvelles notifications</div>
    </section>
  </main>

  <footer class="taskbar">
    <button class="start" aria-label="Démarrer"><svg viewBox="0 0 16 16" width="16" height="16" fill="#fff"><path d="M0 2.200 7 1v6.500H0zM8 1l8-1v7.500H8zM0 8.500h7V15l-7-1.200zM8 8.500h8V16l-8-1z"/></svg></button>
    <label class="search"><svg viewBox="0 0 18 18" width="18" height="18" fill="none" stroke="#222" stroke-width="1.300"><circle cx="11" cy="6.500" r="5"/><path d="m7.500 10.500-6 6"/></svg><input type="text" placeholder="Taper ici pour rechercher" aria-label="Taper ici pour rechercher"></label>
    <div class="apps">
      <button aria-label="Cortana"><svg viewBox="0 0 24 24"><circle cx="12" cy="12" r="6.800" fill="none" stroke="#fff" stroke-width="2"/></svg></button>
      <button aria-label="Vue des tâches"><svg viewBox="0 0 24 24" fill="none" stroke="#fff"><path d="M4.500 8.500h10v7h-10zM4.500 4v2.500h10V4M4.500 20v-2.500h10V20M18.500 4v16M17.500 9.500h2v3h-2z"/></svg></button>
      <button class="run" aria-label="Enregistreur"><svg viewBox="0 0 24 24"><path d="M1 0h22v24H1z" fill="#111"/><path d="M2 3h20v18H2z" fill="url(#film)"/><path d="M2 1.500h20M2 22.500h20" stroke="#777" stroke-dasharray="1 2"/></svg></button>
      <button class="run" aria-label="Chrome"><svg viewBox="0 0 24 24"><circle cx="12" cy="11" r="10.500" fill="#e9c23a"/><path d="M3 6a10.500 10.500 0 0 1 18.500 0H12L8 13z" fill="#dd4b3e"/><path d="M3 6a10.500 10.500 0 0 0 8 15.500L15 14H8z" fill="#3f9d55"/><circle cx="12" cy="11" r="4.500" fill="#4b8bf5" stroke="#fff" stroke-width="1.500"/><circle cx="17" cy="17" r="6.500" fill="#555"/><path d="M14 13h6l2 3-3 6-5-3z" fill="#e7ddd0"/><path d="m13 17 8 1-3 4z" fill="#222"/></svg></button>
      <button aria-label="Firefox"><svg viewBox="0 0 24 24"><path d="M12 2q2 3 5 3 5 4 5 9a10 10 0 0 1-20 0q0-6 3-9l2 3z" fill="#ff7a1a"/><path d="M14 1q2 5 6 6 4 8-2 13-4 3-9 2 9-3 7-11z" fill="#ffca2b"/><circle cx="12" cy="13" r="5" fill="#8e4ae0"/><path d="M3 14q5 8 14 5-4 5-10 3z" fill="#ef3e63"/></svg></button>
      <button aria-label="CCleaner"><svg viewBox="0 0 24 24"><path d="M23 3v6h-4q-4-3-7 0t0 7q4 3 7 0h4v5q-9 4-15 0-5-5-2-12 5-8 17-6z" fill="#c5302b"/><path d="m11 1 4-1-1 13-4 1z" fill="#3b7fc4"/><path d="m1 17 8-5 5 2-3 9q-8 1-10-6z" fill="#edd6b0"/></svg></button>
      <button aria-label="Malwarebytes"><svg viewBox="0 0 24 24"><path d="M4 22Q-3 11 3 2q3 5 9 11 6-6 9-11 6 9-1 20l-4-1q3-4 2-9-3 4-6 6-3-2-6-6-1 5 2 9z" fill="#1746d0"/></svg></button>
      <button aria-label="Navigateur"><svg viewBox="0 0 24 24"><circle cx="12" cy="12" r="11" fill="#1464a5" stroke="#cfe0ee" stroke-width="1.500"/><path d="M14 3q-7 4-4 10t12 3q-4 6-10 5-8-2-7-10 2-7 9-8z" fill="#fff"/></svg></button>
      <button aria-label="PDF"><svg viewBox="0 0 24 24"><path d="M1 1h22v22H1z" fill="#e9f1fa"/><path d="M1 1h22v7H1z" fill="#6fa9e0"/><path d="M5 1h2v7H5z" fill="#e44"/><path d="M4 15q4-8 7-3t8-2" stroke="#1b5da8" stroke-width="2" fill="none"/><path d="M9 16h14v7H9z" fill="#d8352a"/><path d="M11 22v-4h2v2h-2M15 18v4h2v-4zM19 22v-4h3M19 20h2" stroke="#fff" fill="none"/></svg></button>
      <button aria-label="Artlantis"><svg viewBox="0 0 24 24"><path d="M9 1h5l8 22h-5L12 8 7 18h5l2 3H6l-1 2H1z" fill="#e4600f"/></svg></button>
      <button aria-label="VLC"><svg viewBox="0 0 24 24"><path d="M10 1h4l6 17H4z" fill="#f58220"/><path d="m8.500 6-1.500 4h10l-1.500-4zM6 13l-1 4h14l-1-4z" fill="#eee"/><path d="M3 17h18l2 6H1z" fill="#f07a12"/></svg></button>
      <button aria-label="Disque"><svg viewBox="0 0 24 24"><circle cx="12" cy="13" r="10.500" fill="#2779d0"/><path d="m12 13 8-8-5-2zM12 13l-8 7 5 2z" fill="#9fd3ff"/><circle cx="12" cy="13" r="3.500" fill="#e6eef8"/><path d="M15 3h8l-3 8z" fill="#f3a229"/><circle cx="5" cy="5" r="3" fill="#d6e4fa" stroke="#2255aa"/><circle cx="19" cy="19" r="3" fill="#d6e4fa" stroke="#2255aa"/></svg></button>
      <button aria-label="Jeu"><svg viewBox="0 0 24 24"><path d="m2 6 8-2 2 4 8-1 2 8-5 6-8-1-5-4z" fill="#1c1c1d"/><path d="m5 8 5-1 2 3-5 2zM13 12l6-1 1 4-5 2zM8 15l4-1 1 3-4 1z" fill="#3a3a3b"/></svg></button>
      <button class="run" aria-label="Papillon"><svg viewBox="0 0 24 24"><circle cx="12" cy="12" r="11" fill="#e8f2ef"/><path d="M12 13Q9 6 5 6q0 6 7 7zM12 13q1-7 7-8 1 7-7 8zM12 13q-6 0-5 5 4 0 5-5zM12 13q6 0 5 5-4 0-5-5z" fill="#1e8d7d" stroke="#1e8d7d"/></svg></button>
      <button class="run" aria-label="Explorateur de fichiers"><svg viewBox="0 0 24 24"><path d="M1 3h8l2 3h12v15H1z" fill="#f6b93b"/><path d="M1 8h22v13H1z" fill="#ffd869"/><path d="M5 13h14v9h-4v-5H9v5H5z" fill="#3d96d8"/></svg></button>
      <button class="run active" aria-label="SolidWorks"><svg viewBox="0 0 20 22"><use href="#i-cube"/></svg></button>
    </div>
    <div class="tray">
      <svg class="cloud" viewBox="0 0 24 18"><path d="M6 17a5 5 0 0 1-1-10 7 7 0 0 1 13-1 5.500 5.500 0 0 1 1 11z" fill="#a9d4f3"/><path d="M5 12a7 7 0 0 1 12-7q-6 0-7 8z" fill="#e4f4ff"/></svg>
      <span class="weather">12°C&nbsp; Nuageux</span>
      <svg class="ti" viewBox="0 0 16 16" fill="none" stroke="#fff" stroke-width="1.300"><path d="m3 10 5-5 5 5"/></svg>
      <svg class="ti" viewBox="0 0 16 16" fill="none" stroke="#fff"><path d="M5 5.500h9.500v7H5z"/><path d="M6.500 7h6.500v4H6.500z" fill="#fff"/><path d="M1 2.500h5M2 0v2.500M5 0v2.500M3.500 3v9"/></svg>
      <svg class="ti" viewBox="0 0 16 16" fill="none" stroke="#fff"><path d="M2 14Q2 4 13 2M5 14q0-6 9-8M8 14q0-3 6-4" opacity=".8"/><circle cx="12" cy="13.500" r="1" fill="#fff"/></svg>
      <svg class="ti" viewBox="0 0 16 16" fill="none" stroke="#fff"><path d="M.5 6H3l3-3v10L3 10H.5zM8.500 6q1.500 2 0 4M10.500 4q3 4 0 8M13 2q4 6 0 12"/></svg>
      <div class="clock"><span>18:19</span><span>06/04/2022</span></div>
      <button class="notif" aria-label="Notifications"><svg viewBox="0 0 18 18" width="18" height="18"><path d="M1 1h16v12H8l-3 4v-4H1z" fill="#fff"/><path d="M4 4.500h10M4 7h10M4 9.500h7" stroke="#444"/></svg><span class="badge">4</span></button>
    </div>
  </footer>
</div>
</body>
</html>
```
FILE: styles.css
```css
* { box-sizing: border-box; }
html, body { margin: 0; height: 100%; }
body { font: 11px/13px "DejaVu Sans Condensed", "DejaVu Sans", sans-serif; color: #333a63; background: #fff; overflow: hidden; }
button { font: inherit; color: inherit; background: none; border: 0; padding: 0; margin: 0; white-space: nowrap; }
input { font: inherit; border: 0; background: none; outline: 0; min-width: 0; padding: 0; }
.sprite { position: absolute; width: 0; height: 0; }
.ic { width: 16px; height: 16px; flex: none; display: block; }
.ic14 { width: 14px; height: 14px; flex: none; display: block; }
.dd { display: block; flex: none; width: 0; height: 0; border: 3px solid transparent; border-top-color: #3a3d5c; border-bottom: 0; }
.dd.off, .dd.gray { border-top-color: #8d90a0; }
.dd.black { border-top-color: #000; }

.app { display: grid; grid-template-rows: auto auto 1fr auto; min-height: 100vh; height: 100%; }

/* Title bar */
.titlebar { display: flex; align-items: stretch; height: 29px; background: linear-gradient(#e9ecfa, #c4c8dc 70%, #b5bad2); border-bottom: 1px solid #4b4d60; }
.brand { display: flex; align-items: center; gap: 5px; width: 134px; padding-left: 3px; border-right: 9px solid #7d80a6; background: linear-gradient(#d7d8e6, #b3b5c8); }
.brand-cube { width: 20px; height: 22px; flex: none; }
.brand-name { font: italic 13px/16px "Liberation Sans", Arial, sans-serif; color: #111; white-space: nowrap; }
.menu { display: flex; align-items: center; gap: 15px; width: 361px; padding: 2px 5px 0 8px; border-right: 1px solid #6f7289; background: linear-gradient(#dfe1f2, #c8cade 30%, #b9bbcf 35%, #c3c5da); }
.menu .pin { margin-left: auto; }
.menu .pin .ic { width: 14px; }
.quick { display: flex; align-items: center; padding-left: 5px; }
.quick button { display: flex; align-items: center; gap: 7px; width: 36px; }
.quick .solo { width: 23px; }
.doc-title { flex: 1; margin: 0; padding-top: 2px; font: inherit; line-height: 26px; text-align: center; color: #333; white-space: nowrap; }
.help-search { display: flex; align-items: center; width: 273px; height: 23px; margin-top: 3px; padding: 0 3px; border: 1px solid #4b4d60; border-radius: 4px; background: linear-gradient(#d3d6e6, #fff); }
.help-search .bulb { width: 14px; height: 18px; flex: none; margin-right: 6px; }
.help-search input { flex: 1; color: #555; }
.help-search input::placeholder { color: #555; opacity: 1; }
.help-search button { display: flex; align-items: center; gap: 5px; }
.help-mag { width: 18px; height: 18px; }
.window-buttons { display: flex; align-items: center; gap: 8px; padding: 0 5px 0 7px; }
.window-buttons .help { display: flex; align-items: center; gap: 8px; }

/* Ribbon */
.ribbon { display: flex; align-items: flex-start; height: 74px; background: linear-gradient(#fcfcff, #eceef6 50%, #d3d5e3 85%, #d8dae8); border-bottom: 2px solid #5b5d70; }
.cmd { display: flex; flex-direction: column; align-items: center; flex: none; padding-top: 14px; text-align: center; }
.cmd.study { width: 66px; padding-top: 9px; }
.cmd.study span { margin-bottom: 10px; }
.cmd > .ic { margin-bottom: 1px; }
.cmd.study > .ic { margin-bottom: 0; height: 14px; }
.w48 { width: 48px; } .w50 { width: 50px; } .w60 { width: 60px; } .w64 { width: 64px; } .w70 { width: 70px; }
.w82 { width: 82px; } .w94 { width: 94px; } .w98 { width: 98px; } .w104 { width: 104px; }
.rule { width: 1px; height: 66px; margin-top: 4px; background: linear-gradient(#e4e6ef, #a9abbc 50%, #e4e6ef); }
.ds { width: 74px; height: 70px; margin-left: auto; margin-right: 6px; }

/* Work area */
.work { display: grid; grid-template: 20px 1fr / 408px 1fr; min-height: 0; }
.tabs { grid-area: 1 / 1 / 2 / 3; justify-self: start; display: flex; z-index: 2; }
.tabs button { height: 19px; border: 1px solid #5c5f73; border-left-width: 0; border-top: 0; background: #b6b9cd; font: 13px/17px "Liberation Sans", Arial, sans-serif; color: #4c4e58; }
.tabs .t1 { width: 87px; } .tabs .t2 { width: 176px; } .tabs .t3 { width: 68px; } .tabs .t4 { width: 57px; } .tabs .t5 { width: 96px; }
.tabs .active { height: 21px; margin-top: -1px; background: linear-gradient(#dadce8, #f7f8fc); font-weight: bold; color: #222; }

.side { grid-area: 2 / 1; display: flex; min-height: 0; border-top: 1px solid #888ba6; z-index: 1; }
.tools { width: 43px; background: linear-gradient(#dfe1ee, #b9bdd6); }
.toolset { display: flex; flex-direction: column; height: 307px; padding: 6px 2px 0 6px; background: linear-gradient(90deg, #eceefb, #b9bdd3); border-bottom: 1px solid #8d90a6; }
.grip { height: 2px; margin-bottom: 7px; background: repeating-linear-gradient(90deg, #8d90a6 0 2px, transparent 2px 4px); }
.toolset button { display: flex; align-items: center; justify-content: space-between; height: 23px; padding-right: 5px; }
.toolset hr { width: 100%; height: 2px; margin: 3px 0; border: 0; border-top: 1px solid #7b7e93; border-bottom: 1px solid #f1f2fa; }
.toolset .pressed { width: 24px; height: 24px; margin-left: -3px; padding: 3px; border: 1px solid #5c5f80; border-radius: 4px; background: #a9adc8; }

.manager { position: relative; flex: 1; min-width: 0; display: flex; flex-direction: column; background: #e1e4ed; border-right: 2px solid #5d6077; }
.mtabs { display: flex; align-items: flex-end; gap: 2px; height: 29px; padding-left: 1px; background: #d0d3e8; border-bottom: 1px solid #8d90a6; border-top: 2px solid #b7bacf; }
.mtabs button { display: flex; align-items: center; justify-content: center; width: 26px; height: 20px; border: 1px solid #7b7e98; border-bottom: 0; border-radius: 3px 3px 0 0; background: #b9bcd4; }
.mtabs .on { height: 21px; margin-bottom: -1px; background: #eef0f8; }
.more { margin: 0 4px 4px auto; font-size: 18px; line-height: 18px; color: #444; }
.filter { display: flex; align-items: center; gap: 4px; height: 18px; margin: 2px 0 1px 1px; padding: 0 7px; border: 1px solid #888ba0; border-radius: 9px; background: linear-gradient(#c9cde4, #fff); }
.funnel { width: 11px; height: 12px; }
.tree { flex: 1; min-height: 0; margin: 0; padding: 0; list-style: none; color: #000; font-family: "Noto Sans", "Open Sans", sans-serif; }
.tree li { display: flex; align-items: center; height: 18px; overflow: hidden; white-space: nowrap; }
.tree li:last-child { height: 22px; padding-bottom: 2px; border-bottom: 2px solid #1e56a0; }
.tree li > svg + svg { width: 15px; margin-left: 3px; }
.tree li > span { margin-left: 5px; }
.tree li > svg + svg + span { margin-left: 4px; }
.tree .root { padding-left: 2px; }
.br { position: relative; flex: none; width: 21px; height: 18px; background: repeating-linear-gradient(#8a8d99 0 1px, transparent 1px 2px) 10px 0 / 1px 100% no-repeat, repeating-linear-gradient(90deg, #8a8d99 0 1px, transparent 1px 2px) 10px 9px / 11px 1px no-repeat; }
.br.last { background-size: 1px 50%, 11px 1px; }
.plus::before { content: ""; position: absolute; left: 6px; top: 5px; width: 9px; height: 9px; border: 1px solid #8a8d99; background: linear-gradient(#223a7a, #223a7a) 1px 3px / 5px 1px no-repeat, linear-gradient(#223a7a, #223a7a) 3px 1px / 1px 5px no-repeat, #fff; }
.hscroll { display: flex; height: 16px; border-top: 1px solid #fff; background: #efefef; color: #444; }
.hscroll button { width: 16px; font-size: 16px; line-height: 12px; }
.hscroll button:last-child { margin-left: auto; }
.thumb { width: 56%; background: #cdcdcd; }
.handle { position: absolute; left: 100%; top: 436px; display: flex; flex-direction: column; justify-content: space-evenly; align-items: center; width: 10px; height: 28px; border: 1px solid #6a6d86; border-left: 0; border-radius: 0 4px 4px 0; background: #c3c6dc; }
.handle i { border: 3px solid transparent; border-right-color: #3a4a90; border-left: 0; }

/* Graphics area */
.viewport { grid-area: 1 / 2 / 3 / 3; position: relative; display: flex; flex-direction: column; min-height: 0; overflow: hidden; background: #fff; }
.model { position: absolute; inset: 0; width: 100%; height: 100%; }
.axis { font: 11px "Liberation Sans", Arial, sans-serif; }
.view-head { position: relative; display: grid; grid-template-columns: 1fr auto 1fr; align-items: center; height: 28px; }
.headsup { grid-column: 2; display: flex; gap: 7px; margin-right: 8px; }
.headsup button { display: flex; align-items: center; gap: 4px; }
.docbuttons { justify-self: end; display: flex; align-items: center; gap: 9px; padding-right: 10px; }
.taskpane { position: relative; align-self: flex-end; display: flex; flex-direction: column; width: 24px; margin-top: 32px; }
.taskpane button { display: flex; align-items: center; justify-content: center; height: 24px; border: 1px solid #7b7e98; border-right: 0; border-radius: 3px 0 0 3px; background: #b6b9d0; }
.taskpane .on { background: #f2f3fa; }
.toast { position: absolute; right: 0; bottom: 0; width: 141px; height: 20px; border: 1px solid #767676; background: #fff; color: #555; font: 11px/18px "Noto Sans", "Open Sans", sans-serif; text-align: center; white-space: nowrap; }

/* Windows taskbar */
.taskbar { display: flex; height: 40px; background: #3b3c40; color: #fff; font-family: "Noto Sans", "Open Sans", sans-serif; }
.start { display: flex; align-items: center; justify-content: center; width: 48px; }
.search { display: flex; align-items: center; gap: 10px; width: 344px; padding-left: 11px; border: 1px solid #c9c9c9; background: #f2f2f2; }
.search input { flex: 1; font-size: 14px; line-height: 20px; color: #333; }
.search input::placeholder { color: #333; opacity: 1; }
.apps { display: flex; }
.apps button { display: flex; align-items: center; justify-content: center; width: 49px; height: 40px; padding-bottom: 2px; }
.apps svg { width: 24px; height: 24px; }
.apps .run { background: linear-gradient(#76b9ed, #76b9ed) 50% 100% / 40px 2px no-repeat; }
.apps .active { background: linear-gradient(#76b9ed, #76b9ed) 50% 100% / 49px 2px no-repeat, #66676b; }
.tray { display: flex; align-items: center; gap: 8px; margin-left: auto; padding-right: 12px; }
.cloud { width: 24px; height: 18px; }
.weather { margin-right: 7px; font-size: 13px; line-height: 18px; }
.ti { width: 16px; height: 16px; }
.clock { display: flex; flex-direction: column; align-items: center; margin-left: 2px; line-height: 18px; }
.notif { position: relative; display: flex; align-items: center; justify-content: center; width: 41px; height: 40px; margin-left: -2px; background: #4a4b4f; }
.badge { position: absolute; right: 3px; bottom: 4px; width: 17px; height: 17px; border: 1px solid #aaa; border-radius: 50%; background: #3b3c40; font-size: 11px; line-height: 15px; }
```
